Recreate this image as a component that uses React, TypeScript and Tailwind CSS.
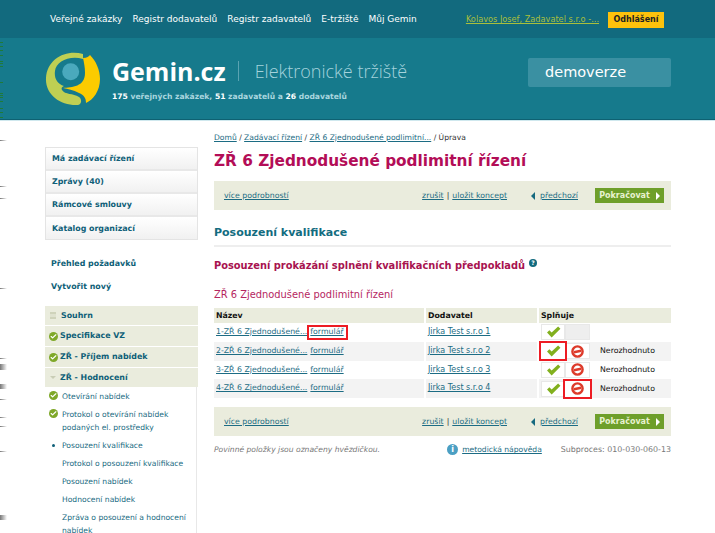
import { Check } from 'lucide-react';

const navLinks = ['Veřejné zakázky', 'Registr dodavatelů', 'Registr zadavatelů', 'E-tržiště', 'Můj Gemin'];
const sideBoxes = ['Má zadávací řízení', 'Zprávy (40)', 'Rámcové smlouvy', 'Katalog organizací'];

const rows = [
  { id: 1, supplier: 'Jirka Test s.r.o 1', state: '', yesMark: false, noMark: false, noIcon: false },
  { id: 2, supplier: 'Jirka Test s.r.o 2', state: 'Nerozhodnuto', yesMark: true, noMark: false, noIcon: true },
  { id: 3, supplier: 'Jirka Test s.r.o 3', state: 'Nerozhodnuto', yesMark: false, noMark: false, noIcon: true },
  { id: 4, supplier: 'Jirka Test s.r.o 4', state: 'Nerozhodnuto', yesMark: false, noMark: true, noIcon: true },
];

// leftovers of the neighbouring column along the left page edge
const edgeTicksGreen = [42, 46, 50, 55, 61, 63, 66, 82, 93, 95, 97, 101, 108, 112, 117];
const edgeTicksGrey = [
  { top: 140, h: 1 }, { top: 186, h: 1 }, { top: 198, h: 1 }, { top: 288, h: 1 }, { top: 358, h: 1 },
  { top: 364, h: 6 }, { top: 384, h: 5 }, { top: 399, h: 1 }, { top: 417, h: 1 }, { top: 426, h: 1 },
  { top: 451, h: 1 }, { top: 515, h: 5 },
];

const GeminLogo = () => (
  <svg width="56" height="56" viewBox="0 0 56 56">
    <path d="M38 3 C22 -2 2 7 1 27 C0 44 16 55 33 54 C37 53 37 48 34 46 C28 42 20 44 17 39 C16 37 17 36 19 35 C12 33 9 27 10 20 C11 11 24 4 38 8 Z" fill="#bfcf53" />
    <path d="M38 7 C42 7 44 5 45 4 C51 10 55 19 55 28 C55 40 48 49 41 52 C41 47 39 44 34 42 C28 39 23 38 18 37 C27 36 40 36 40 22 C40 16 39 12 38 7 Z" fill="#fccb00" />
    <circle cx="25.7" cy="20.7" r="8.5" fill="#4aa9bd" />
  </svg>
);

const CheckDot = () => (
  <span className="flex h-[9px] w-[9px] shrink-0 items-center justify-center rounded-full bg-[#7fa82a]">
    <Check size={7} strokeWidth={4} className="text-white" />
  </span>
);

const StopIcon = () => (
  <svg width="13" height="13" viewBox="0 0 14 14">
    <circle cx="7" cy="7" r="5.5" fill="#fff" stroke="#dd3a2a" strokeWidth="2.6" />
    <rect x="3" y="5.7" width="8" height="2.6" fill="#dd3a2a" transform="rotate(-12 7 7)" />
  </svg>
);

const GreenCheck = () => (
  <svg width="15" height="12" viewBox="0 0 16 13">
    <path d="M1 7 L3.5 4.5 L6 7 L13 0.5 L15.5 3 L6 12.5 Z" fill="#82b01e" />
  </svg>
);

const ActionBar = () => (
  <div className="flex h-[29px] items-center bg-[#eaecdd] pl-[10px] pr-[7px] text-[7.8px]">
    <a className="text-[#1c6c84] underline">více podrobností</a>
    <a className="ml-auto text-[#1c6c84] underline">zrušit</a>
    <span className="mx-[3px] text-[#333]">|</span>
    <a className="text-[#1c6c84] underline">uložit koncept</a>
    <span className="ml-[24px] mr-[5px] h-0 w-0 border-y-[4px] border-r-[4px] border-y-transparent border-r-[#176a80]" />
    <a className="text-[#1c6c84] underline">předchozí</a>
    <button className="ml-[17px] flex h-[15px] w-[69px] items-center justify-center gap-[6px] bg-[#6e9f2a] text-[8px] font-bold text-[#e8f2d0]">
      Pokračovat
      <span className="h-0 w-0 border-y-[4px] border-l-[4px] border-y-transparent border-l-white" />
    </button>
  </div>
);

export default function App() {
  return (
    <div className="relative h-[533px] w-[715px] overflow-hidden bg-white font-['DejaVu_Sans',sans-serif] text-[10px]">
      {/* top navigation */}
      <div className="flex h-[38px] items-center bg-[#126a7e] pl-[50px] pr-[51px] pt-[1px] text-white">
        <nav className="flex gap-[10px] text-[9px]">
          {navLinks.map((link) => (
            <a key={link}>{link}</a>
          ))}
        </nav>
        <a className="ml-auto text-[8.2px] text-[#a9bf3c] underline">Kolavos Josef, Zadavatel s.r.o -...</a>
        <button className="ml-[9px] h-[16px] w-[56px] bg-[#fdc20c] text-[8px] font-bold text-[#222]">Odhlášení</button>
      </div>

      {/* brand strip */}
      <header className="flex h-[82px] border-b border-[#0e6172] bg-[#167a8c] pl-[45px] pr-[44px] pt-[13px]">
        <GeminLogo />
        <div className="ml-[11px] pt-[5px]">
          <div className="flex items-center">
            <span className="font-['Open_Sans',sans-serif] text-[25px] font-bold leading-[30px] text-white">Gemin.cz</span>
            <span className="ml-[12px] h-[20px] w-px bg-[#5aa3b2]" />
            <span className="ml-[16px] font-['Open_Sans',sans-serif] text-[18px] font-light text-[#a5d3dc]">Elektronické tržiště</span>
          </div>
          <p className="mt-[5px] text-[7.6px] font-bold text-[#a9d6df]">
            <span className="text-white">175</span> veřejných zakázek, <span className="text-white">51</span> zadavatelů a{' '}
            <span className="text-white">26</span> dodavatelů
          </p>
        </div>
        <div className="ml-auto mt-[7px] flex h-[29px] w-[143px] items-center rounded-[2px] bg-[#3a90a2] pl-[17px] text-[14.5px] text-white">
          demoverze
        </div>
      </header>
      <div className="h-px bg-[#cfe8ee]" />

      <div className="flex pl-[45px] pt-[10px]">
        {/* left column */}
        <aside className="w-[153px] shrink-0 pt-[16px] font-bold text-[#0f5f78]">
          <div className="border border-[#e4e4e4]">
            {sideBoxes.map((item) => (
              <div key={item} className="flex h-[23px] items-center border-b-2 border-[#e8e8e8] bg-gradient-to-b from-white to-[#f1f1f1] pl-[6px] pt-[1px] text-[7.9px] last:h-[22px] last:border-b-0">
                {item}
              </div>
            ))}
          </div>
          <div className="mt-[12px] pl-[6px] text-[7.9px] leading-[23px]">
            <div>Přehled požadavků</div>
            <div>Vytvořit nový</div>
          </div>
          <div className="mt-[8px] text-[7.9px]">
            <div className="flex h-[19px] items-center gap-[5px] bg-[#eaecdd] pl-[5px]">
              <span className="h-[7px] w-[6px] border-y-2 border-[#cfd3bb] bg-[#dfe2cf]" />
              <span>Souhrn</span>
            </div>
            <div className="mt-px flex h-[20px] items-center gap-[2px] bg-[#eaecdd] pl-[4px]">
              <CheckDot />Specifikace VZ
            </div>
            <div className="mt-px flex h-[20px] items-center gap-[2px] bg-[#eaecdd] pl-[4px]">
              <CheckDot />ZŘ - Příjem nabídek
            </div>
            <div className="mt-px flex h-[19px] items-center gap-[2px] bg-[#eaecdd] pl-[5px]">
              <span className="mr-[2px] h-0 w-0 border-x-[3px] border-t-[3px] border-x-transparent border-t-[#c9cdb6]" />
              ZŘ - Hodnocení
            </div>
          </div>
          <ul className="mr-[1px] border-r border-[#e8e8e8] text-[7.6px] font-normal leading-[13px] text-[#206b82]">
            <li className="flex items-start gap-[4px] py-[2.5px] pl-[4px]"><span className="mt-[1px]"><CheckDot /></span>Otevírání nabídek</li>
            <li className="flex items-start gap-[4px] py-[2.5px] pl-[4px]"><span className="mt-[1px]"><CheckDot /></span><span>Protokol o otevírání nabídek<br />podaných el. prostředky</span></li>
            <li className="flex items-center py-[2.5px] pl-[7px]"><span className="mr-[7px] h-[3px] w-[3px] rounded-full bg-[#0f5f78]" />Posouzení kvalifikace</li>
            <li className="py-[2.5px] pl-[17px]">Protokol o posouzení kvalifikace</li>
            <li className="py-[2.5px] pl-[17px]">Posouzení nabídek</li>
            <li className="py-[2.5px] pl-[17px]">Hodnocení nabídek</li>
            <li className="py-[2.5px] pl-[17px]">Zpráva o posouzení a hodnocení<br />nabídek</li>
          </ul>
        </aside>

        {/* main column */}
        <main className="ml-[16px] w-[457px] shrink-0">
          <div className="mt-[1px] h-[12px] text-[7.6px] leading-[12px] text-[#333]">
            <a className="text-[#1c6c84] underline">Domů</a> / <a className="text-[#1c6c84] underline">Zadávací řízení</a> /{' '}
            <a className="text-[#1c6c84] underline">ZŘ 6 Zjednodušené podlimitní...</a> / Úprava
          </div>
          <h1 className="mt-[7px] text-[15.3px] font-bold leading-[20px] text-[#b30d57]">ZŘ 6 Zjednodušené podlimitní řízení</h1>
          <div className="mt-[10px]"><ActionBar /></div>
          <h2 className="mt-[16px] text-[11px] font-bold leading-[14px] text-[#136c80]">Posouzení kvalifikace</h2>
          <div className="mt-[5px] h-[2px] bg-[#eee]" />
          <h3 className="mt-[12px] flex text-[9.85px] font-bold leading-[14px] text-[#a8134f]">
            Posouzení prokázání splnění kvalifikačních předpokladů
            <span className="ml-[4px] flex h-[8px] w-[8px] items-center justify-center rounded-full bg-[#126a7e] text-[6px] text-white">?</span>
          </h3>
          <p className="mt-[15px] text-[9.9px] leading-[14px] text-[#b5265f]">ZŘ 6 Zjednodušené podlimitní řízení</p>

          {/* offers table */}
          <table className="mt-[6px] w-[457px] table-fixed border-collapse text-[7.8px] text-[#1c6c84]">
            <thead>
              <tr className="h-[15px] bg-[#eaecdd] text-left text-[#111]">
                <th className="w-[211px] border-r-2 border-white pl-[2px] font-bold">Název</th>
                <th className="w-[113px] border-r-2 border-white pl-[2px] font-bold">Dodavatel</th>
                <th className="pl-[2px] font-bold">Splňuje</th>
              </tr>
            </thead>
            <tbody>
              {rows.map((row) => (
                <tr key={row.id} className="h-[18.75px] even:bg-[#f3f3f3]">
                  <td className="border-r-2 border-white pl-[2px] pt-[3px] align-top">
                    <div className="flex items-center">
                      <a className="underline">{row.id}-ZŘ 6 Zjednodušené...</a>
                      <span className="relative ml-[3px] flex">
                        <a className="underline">formulář</a>
                        {/* flagged link gets a red frame on top */}
                        {row.id === 1 && (
                          <span className="absolute -left-[3px] -top-[1px] h-[15px] w-[41px] border-2 border-[#ed1c24]" />
                        )}
                      </span>
                    </div>
                  </td>
                  <td className="border-r-2 border-white pl-[2px] pt-[3px] align-top text-[8px]"><a className="underline">{row.supplier}</a></td>
                  <td className="pl-[2px]">
                    <div className="flex items-center text-[#111]">
                      <span className={`flex h-[16px] w-[24px] items-center justify-center bg-white ${row.yesMark ? 'z-20 outline-2 outline-[#ed1c24]' : 'border border-[#e8e8e8]'}`}>
                        <GreenCheck />
                      </span>
                      <span className={`flex h-[16px] w-[25px] items-center justify-center ${row.noIcon ? 'bg-white' : 'bg-[#eee]'} ${row.noMark ? 'z-20 outline-2 outline-[#ed1c24]' : 'border border-[#e8e8e8]'}`}>
                        {row.noIcon && <StopIcon />}
                      </span>
                      {row.state && <span className="ml-[10px]">{row.state}</span>}
                    </div>
                  </td>
                </tr>
              ))}
            </tbody>
          </table>

          <div className="mt-[9px]"><ActionBar /></div>
          <div className="mt-[8px] flex items-center text-[7.6px] text-[#777]">
            <em>Povinné položky jsou označeny hvězdičkou.</em>
            <span className="ml-auto flex h-[11px] w-[11px] items-center justify-center rounded-full bg-[#4b9fc3] text-[8px] font-bold text-white">i</span>
            <a className="ml-[4px] text-[#1c6c84] underline">metodická nápověda</a>
            <span className="ml-[19px] text-[7.9px]">Subproces: 010-030-060-13</span>
          </div>
        </main>
      </div>

      {/* edge ticks */}
      {edgeTicksGreen.map((top) => (
        <span key={top} className="absolute left-0 h-px w-[3px] bg-[#1f7a3a]" style={{ top }} />
      ))}
      {edgeTicksGrey.map((tick) => (
        <span
          key={tick.top}
          className="absolute left-0 w-[7px] bg-gradient-to-r from-[#777] to-transparent"
          style={{ top: tick.top, height: tick.h }}
        />
      ))}
    </div>
  );
}
